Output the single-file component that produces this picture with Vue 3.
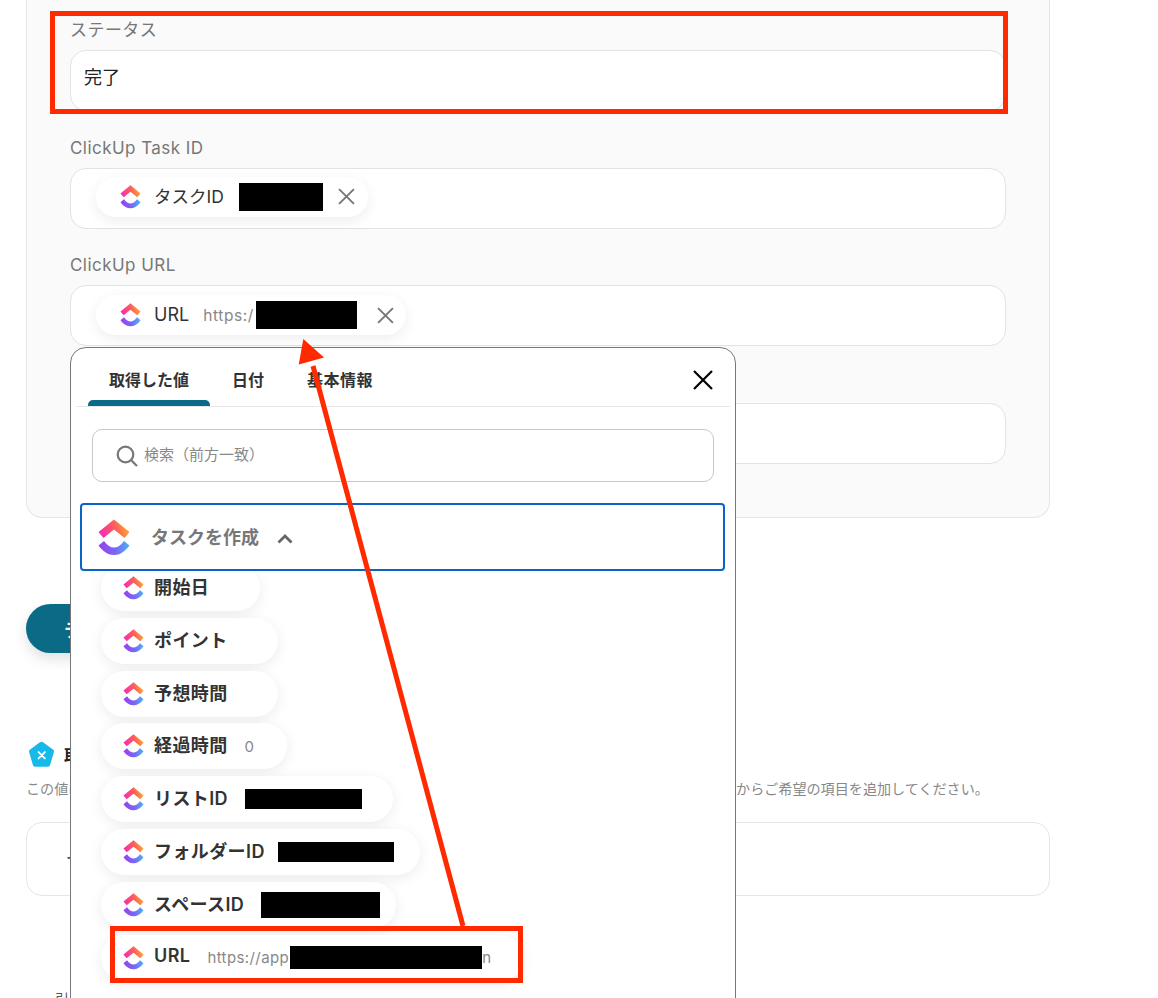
<script setup>
const fields = [
  { label: 'ステータス', value: '完了' },
  { label: 'ClickUp Task ID', chip: { name: 'タスクID', lead: '', redact: 84, tail: '', cls: 'task' } },
  { label: 'ClickUp URL', chip: { name: 'URL', lead: 'https:/', redact: 101, tail: '', cls: 'url' } },
  { label: 'ClickUp 更新日時' }
]
const items = [
  { name: '開始日', pad: 51 },
  { name: 'ポイント', pad: 50 },
  { name: '予想時間', pad: 50 },
  { name: '経過時間', value: '0', pad: 33 },
  { name: 'リストID', rw: 117, rh: 20, rl: 17, pad: 31 },
  { name: 'フォルダーID', rw: 116, rh: 20, rl: 13, pad: 26 },
  { name: 'スペースID', rw: 119, rh: 26, rl: 17, pad: 16 },
  { name: 'URL', value: 'https://app', rw: 192, rh: 23, rl: 1, tail: 'n', pad: 32 }
]
const tabs = ['取得した値', '日付', '基本情報']
</script>

<template>
  <div class="page">
    <svg class="defs" width="0" height="0" aria-hidden="true">
      <defs>
        <linearGradient id="cuTop" x1="0" y1="0.6" x2="1" y2="0.4">
          <stop offset="0" stop-color="#f82bb5" />
          <stop offset="0.55" stop-color="#fb5f5a" />
          <stop offset="1" stop-color="#ffb02e" />
        </linearGradient>
        <linearGradient id="cuBottom" x1="0" y1="0.5" x2="1" y2="0.5">
          <stop offset="0" stop-color="#9a3ff0" />
          <stop offset="0.55" stop-color="#7a66f5" />
          <stop offset="1" stop-color="#4bb5f8" />
        </linearGradient>
        <symbol id="cu" viewBox="0 0 32 37">
          <path fill="url(#cuTop)" d="M0.5 13 16 0.5 31.5 13 26.5 19 16 10.5 5.5 19Z" />
          <path fill="url(#cuBottom)" d="M0.5 26.500 6 22C9.500 26.500 12.500 28.600 16 28.600S22.500 26.500 26 22L31.500 26.500C26.800 32.700 21.800 36 16 36S5.200 32.700 0.500 26.500Z" />
        </symbol>
      </defs>
    </svg>

    <section class="card">
      <div v-for="f in fields" :key="f.label" class="group">
        <div class="label">{{ f.label }}</div>
        <div class="field">
          <span v-if="f.value" class="value">{{ f.value }}</span>
          <span v-if="f.chip" class="vchip" :class="f.chip.cls">
            <svg class="logo-s"><use href="#cu" /></svg>
            <span class="vname">{{ f.chip.name }}</span>
            <span v-if="f.chip.lead" class="vlead">{{ f.chip.lead }}</span>
            <span class="redact" :style="{ width: f.chip.redact + 'px', height: '28px' }"></span>
            <svg class="vx" viewBox="0 0 16 16"><path d="M1 1 15 15M15 1 1 15" /></svg>
          </span>
        </div>
      </div>
    </section>

    <button class="test">テスト</button>

    <div class="out-head">
      <svg class="penta" viewBox="0 0 28 28">
        <path fill="#17b9e8" d="M14 .8a2.600 2.600 0 0 1 1.600.5L25.800 8.700a2.600 2.600 0 0 1 1 2.900L23 24.600a2.600 2.600 0 0 1-2.500 2H7.500a2.600 2.600 0 0 1-2.500-2L1.200 11.600a2.600 2.600 0 0 1 1-2.900L12.400 1.300A2.600 2.600 0 0 1 14 .8Z" />
        <path d="M11 11.500 17.500 18M17.500 11.500 11 18" stroke="#fff" stroke-width="2" stroke-linecap="round" />
      </svg>
      <span>取得した値</span>
    </div>
    <p class="desc">この値は、他のオペレーションで利用することができます。取得したい値がある場合は、「＋取得する値を追加」からご希望の項目を追加してください。</p>
    <div class="add-box"><span class="plus">＋ 取得する値を追加</span></div>
    <div class="foot">引き続き設定してください</div>

    <aside class="popup">
      <div class="tabs">
        <span v-for="(t, i) in tabs" :key="t" class="tab" :class="{ on: i === 0 }">{{ t }}</span>
        <svg class="close" viewBox="0 0 20 20"><path d="M1 1 19 19M19 1 1 19" /></svg>
      </div>
      <div class="search">
        <svg class="glass" viewBox="0 0 22 22"><circle cx="9.500" cy="9.500" r="7.800" /><path d="M15.200 15.200 21 21" /></svg>
        <span class="ph">検索（前方一致）</span>
      </div>
      <div class="acc">
        <svg class="logo-l"><use href="#cu" /></svg>
        <span class="acc-t">タスクを作成</span>
        <svg class="chev" viewBox="0 0 16 10"><path d="M1.500 8.500 8 2l6.500 6.500" /></svg>
      </div>
      <ul class="list">
        <li v-for="it in items" :key="it.name" class="chip" :style="{ paddingRight: it.pad + 'px' }">
          <svg class="logo-m"><use href="#cu" /></svg>
          <span class="cname">{{ it.name }}</span>
          <span v-if="it.value" class="cval">{{ it.value }}</span>
          <span v-if="it.rw" class="redact" :style="{ width: it.rw + 'px', height: it.rh + 'px', marginLeft: it.rl + 'px' }"></span>
          <span v-if="it.tail" class="ctail">{{ it.tail }}</span>
        </li>
      </ul>
    </aside>

    <div class="mark mark-a"></div>
    <div class="mark mark-b"></div>
    <svg class="arrow" width="1158" height="998" viewBox="0 0 1158 998">
      <path d="M463 926 313 366" stroke="#ff2a00" stroke-width="5" fill="none" />
      <path d="M304 341 300 363 322 357Z" fill="#ff2a00" stroke="#ff2a00" stroke-width="2" />
    </svg>
  </div>
</template>

<style scoped>
.page {
  position: relative;
  width: 1158px;
  height: 998px;
  overflow: hidden;
  padding: 0 108px 0 26px;
  box-sizing: border-box;
  background: #fff;
  font-family: Inter, "Noto Sans CJK JP", sans-serif;
  color: #333;
}
.defs { position: absolute; }
.card {
  display: flex;
  flex-direction: column;
  gap: 22.7px;
  padding: 16px 43px 53px;
  background: #fafafa;
  border: 1px solid #e6e6e8;
  border-top: 0;
  border-radius: 0 0 16px 16px;
}
.label {
  height: 26px;
  line-height: 28px;
  margin-bottom: 8px;
  font-size: 17px;
  letter-spacing: 0.45px;
  color: #777;
}
.field {
  display: flex;
  align-items: center;
  height: 61px;
  box-sizing: border-box;
  padding: 0 25px;
  background: #fff;
  border: 1px solid #e2e2e8;
  border-radius: 16px;
}
.value { margin: -9px 0 0 -12px; font-size: 18px; color: #222; }
.vchip {
  display: flex;
  align-items: center;
  height: 40px;
  margin-top: -3px;
  background: #fff;
  border-radius: 20px;
  box-shadow: 0 4px 14px rgba(0, 0, 0, .07);
}
.vchip.task { width: 272px; padding-left: 24px; box-sizing: border-box; }
.vchip.url { width: 310px; margin-top: -1px; padding-left: 24px; box-sizing: border-box; }
.logo-s { width: 21px; height: 24px; flex: none; }
.vname { margin: -2px 0 0 13px; font-size: 17.500px; color: #333; white-space: nowrap; }
.url .vname { font-size: 18px; }
.vlead { margin-left: 14px; font-size: 15.500px; letter-spacing: .6px; color: #888; }
.task .redact { margin-left: 15px; }
.url .redact { margin-left: 2px; }
.vx { width: 17px; height: 17px; margin-left: 15px; flex: none; fill: none; stroke: #777; stroke-width: 1.800; }
.url .vx { margin-left: 20px; }
.redact { display: inline-block; flex: none; background: #000; }

.test {
  display: block;
  width: 150px;
  height: 49px;
  margin-top: 86px;
  padding: 0 0 0 38px;
  border: 0;
  border-radius: 25px;
  background: #0b6a85;
  color: #fff;
  font: 600 18px Inter, "Noto Sans CJK JP", sans-serif;
  text-align: left;
  box-shadow: 0 6px 14px rgba(0, 0, 0, .12);
}
.out-head {
  display: flex;
  align-items: center;
  gap: 9px;
  margin: 88px 0 0 2px;
  font-size: 17px;
  font-weight: 700;
  color: #222;
}
.penta { width: 27px; height: 27px; flex: none; }
.desc {
  margin: 11px 0 0;
  font-size: 14.100px;
  line-height: 20px;
  white-space: nowrap;
  color: #888;
}
.add-box {
  display: flex;
  align-items: center;
  height: 74px;
  margin-top: 23px;
  padding-left: 38px;
  box-sizing: border-box;
  border: 1px solid #e6e6e6;
  border-radius: 16px;
  background: #fff;
}
.plus { margin-top: -6px; font-size: 17px; font-weight: 600; color: #0b6a85; }
.foot { margin: 92px 0 0 29px; font-size: 14px; color: #555; }

.popup {
  position: absolute;
  z-index: 1;
  left: 70px;
  top: 347px;
  width: 666px;
  height: 700px;
  box-sizing: border-box;
  background: #fff;
  border: 1px solid #777;
  border-radius: 16px 16px 0 0;
}
.tabs {
  position: relative;
  display: flex;
  align-items: stretch;
  height: 59px;
  margin: 0 5px;
  padding: 0 12px;
  box-sizing: border-box;
  border-bottom: 1px solid #e8e8e8;
}
.tab {
  display: flex;
  align-items: center;
  justify-content: center;
  padding: 6px 21px 0;
  box-sizing: border-box;
  font-size: 16px;
  font-weight: 600;
  color: #333;
  white-space: nowrap;
}
.tab:nth-child(2) { padding: 4px 22px 0; }
.tab:nth-child(3) { margin-left: 21px; padding: 4px 0 0; letter-spacing: .5px; }
.tab.on {
  position: relative;
  width: 122px;
  padding: 4px 0 0;
}
.tab.on::after {
  content: "";
  position: absolute;
  left: 0;
  right: 0;
  bottom: 0;
  height: 6px;
  border-radius: 5px 5px 0 0;
  background: #0b6a85;
}
.close {
  position: absolute;
  right: 17px;
  top: 22px;
  width: 20px;
  height: 20px;
  fill: none;
  stroke: #000;
  stroke-width: 2.200;
}
.search {
  display: flex;
  align-items: center;
  gap: 6px;
  height: 53px;
  margin: 22px 21px 0;
  padding-left: 23px;
  box-sizing: border-box;
  border: 1px solid #c8c8c8;
  border-radius: 10px;
  font-size: 15px;
  color: #888;
}
.ph { margin-top: -4px; }
.glass { width: 22px; height: 22px; fill: none; stroke: #777; stroke-width: 2.200; }
.acc {
  position: relative;
  z-index: 2;
  display: flex;
  align-items: center;
  height: 68px;
  margin: 21px 10px 0 9px;
  padding-left: 16px;
  box-sizing: border-box;
  border: 2px solid #0a64c8;
  border-radius: 4px;
  background: #fff;
}
.logo-l { width: 32px; height: 37px; flex: none; }
.acc-t { margin: -2px 0 0 21px; font-size: 18px; font-weight: 600; color: #777; }
.chev { width: 16px; height: 10px; margin: 3px 0 0 18px; fill: none; stroke: #666; stroke-width: 2.800; }
.list {
  display: flex;
  flex-direction: column;
  align-items: flex-start;
  gap: 6.800px;
  margin: -6px 0 0 30px;
  padding: 0;
  list-style: none;
}
.chip {
  display: flex;
  align-items: center;
  height: 46px;
  padding-left: 22px;
  box-sizing: border-box;
  background: #fff;
  border-radius: 23px;
  box-shadow: 0 3px 14px rgba(0, 0, 0, .08);
  white-space: nowrap;
}
.logo-m { width: 21px; height: 24px; flex: none; }
.cname { margin: -4px 0 0 10px; font-size: 18px; font-weight: 600; letter-spacing: .4px; color: #333; }
.cval { margin-left: 17px; font-size: 15px; letter-spacing: .4px; color: #888; }
.ctail { font-size: 15px; color: #888; }

.mark {
  position: absolute;
  z-index: 2;
  box-sizing: border-box;
  border: 5px solid #ff2a00;
}
.mark-a { left: 50px; top: 11px; width: 958px; height: 103px; }
.mark-b { left: 110px; top: 926px; width: 413px; height: 57px; }
.arrow { position: absolute; z-index: 2; left: 0; top: 0; pointer-events: none; }
</style>
